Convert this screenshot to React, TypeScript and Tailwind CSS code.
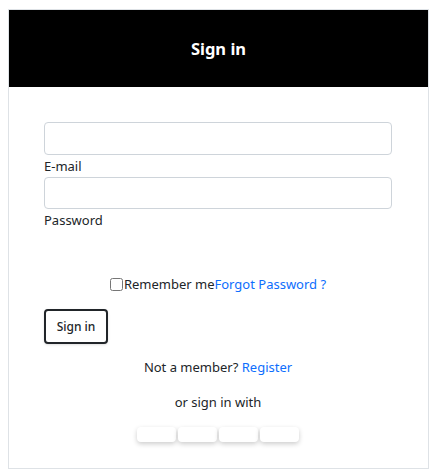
import React from "react";

export default function App() {
  const font = { fontFamily: '"Noto Sans", "Open Sans", sans-serif' };
  return (
    <div className="bg-white w-[436px] h-[473px] pt-[9px] pl-[8px]" style={font}>
      <div className="w-[421px] border border-[#dee2e6] bg-white text-[#212529]">
        <div className="h-[77px] pt-[1px] bg-black flex items-center justify-center text-white font-bold text-[16.5px]">
          Sign in
        </div>
        <div className="pl-[35px] pr-[36px] pt-[35px] pb-[26px] flex flex-col">
          <input className="h-[33px] w-full border border-[#ced4da] rounded-[4px] outline-none" type="email" />
          <label className="text-[13px] leading-[21px] pt-px">E-mail</label>
          <input className="h-[32px] w-full border border-[#ced4da] rounded-[4px] outline-none" type="password" />
          <label className="text-[13px] leading-[21px] pt-px">Password</label>
          <div className="mt-[43px] flex items-center justify-center text-[13px] leading-[21px]">
            <input type="checkbox" className="w-[13px] h-[13px] m-0 mr-px" />
            <span>Remember me</span>
            <a className="text-[#0d6efd]">Forgot Password ?</a>
          </div>
          <div className="mt-[14px]">
            <button className="h-[35px] w-[64px] border-2 border-[#212529] rounded-[4px] text-[12px] font-medium shadow-sm bg-white">
              Sign in
            </button>
          </div>
          <p className="mt-[13px] text-center text-[13px] leading-[21px]">
            Not a member? <a className="text-[#0d6efd]">Register</a>
          </p>
          <p className="mt-[14px] text-center text-[13px] leading-[21px]">or sign in with</p>
          <div className="mt-[14px] flex justify-center gap-[2px]">
            {[0, 1, 2, 3].map((i) => (
              <button key={i} className="w-[39px] h-[15px] rounded-[4px] bg-white shadow-[0_2px_5px_rgba(0,0,0,0.2)]" />
            ))}
          </div>
        </div>
      </div>
    </div>
  );
}
